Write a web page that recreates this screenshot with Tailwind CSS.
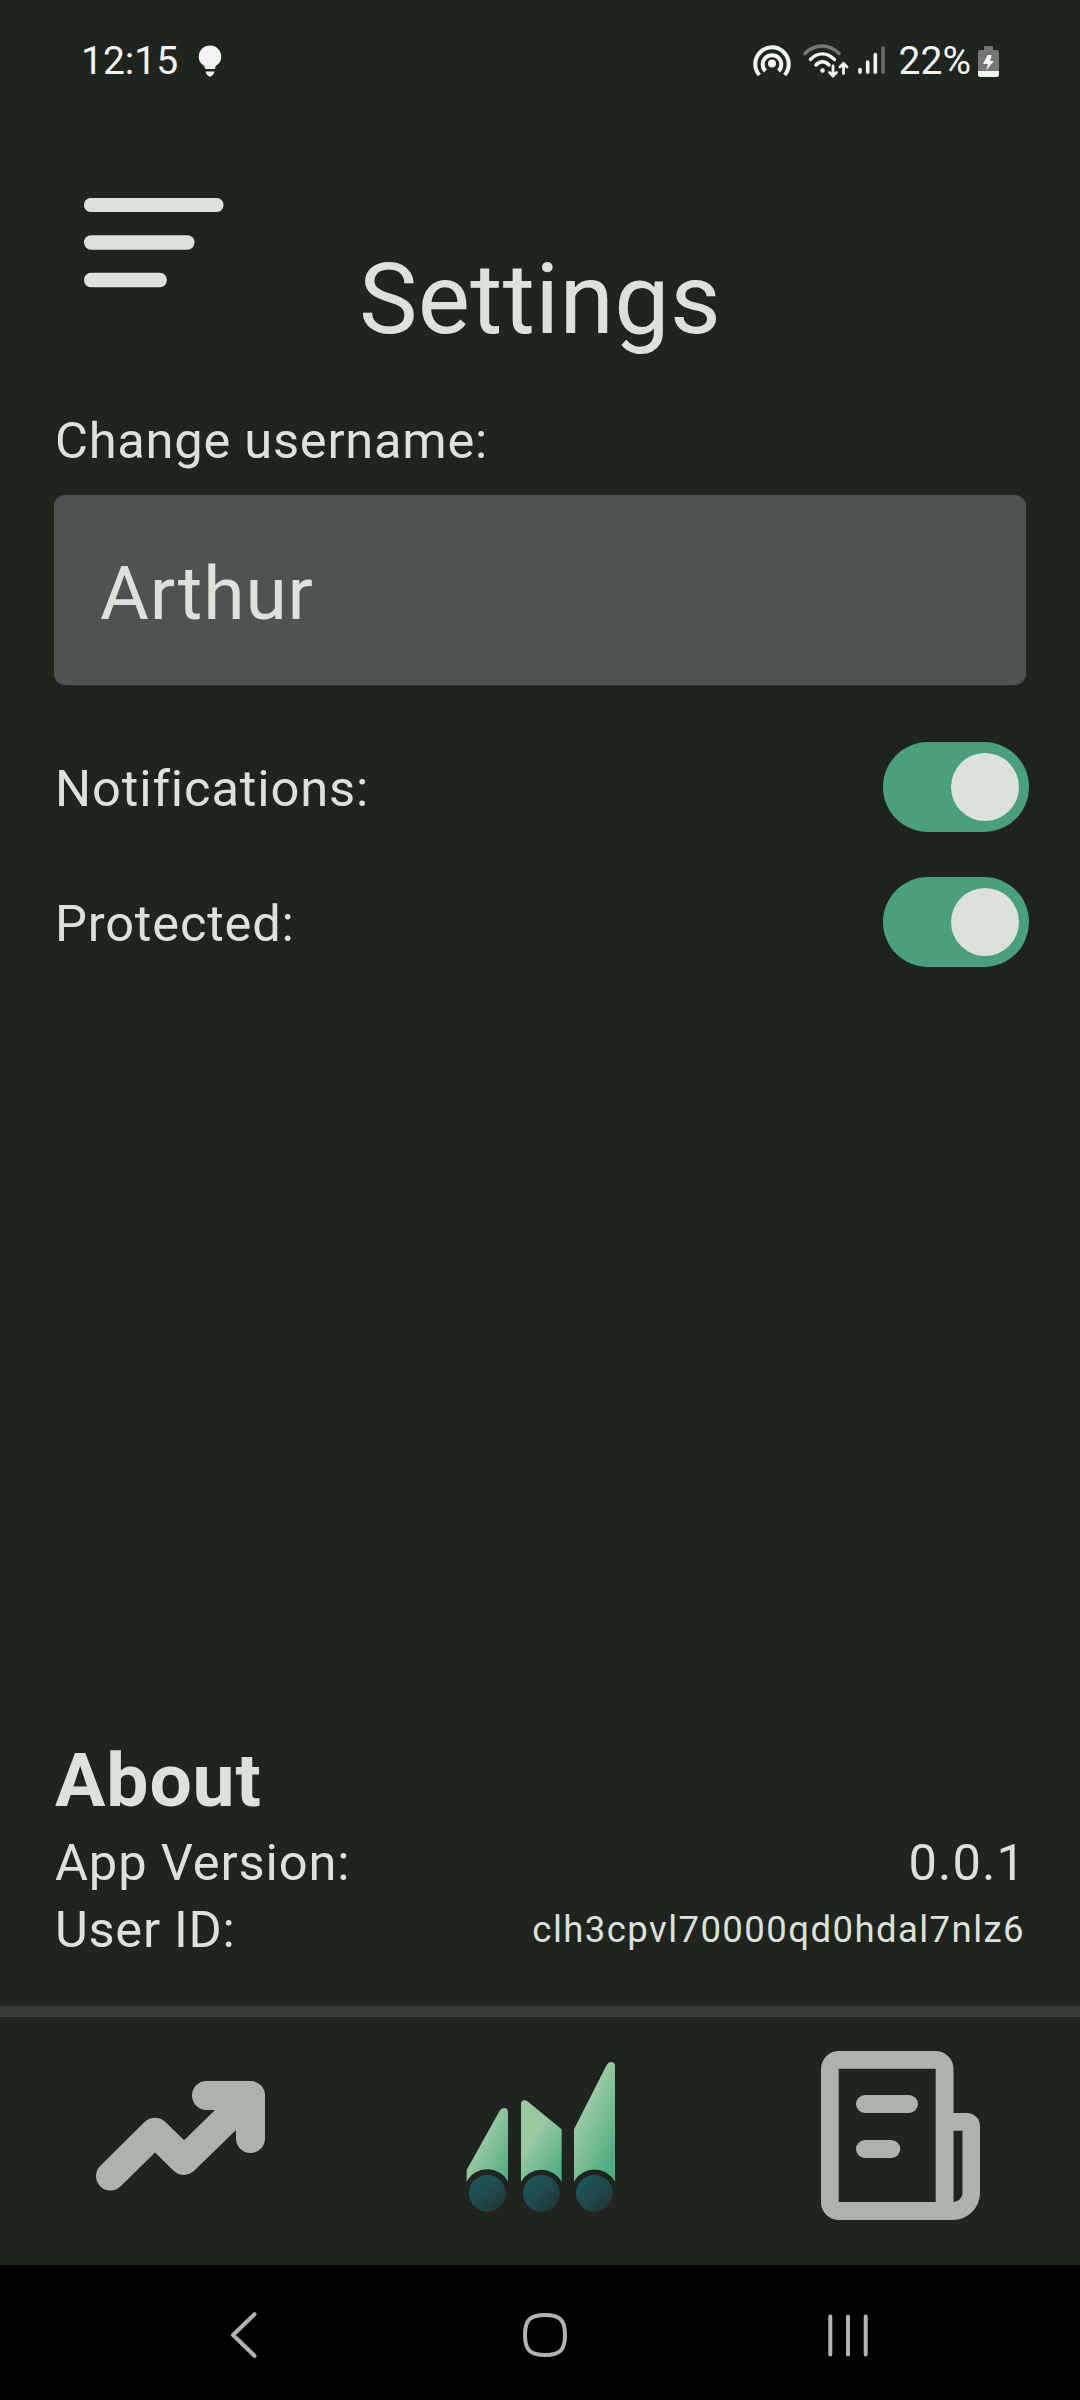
<!DOCTYPE html>
<html lang="en">
<head>
<meta charset="utf-8">
<title>Settings</title>
<script src="https://cdn.jsdelivr.net/npm/@tailwindcss/browser@4"></script>
</head>
<body class="bg-[#20241f]">
<div class="flex h-[2400px] w-[1080px] flex-col overflow-hidden bg-[#20241f] font-[Roboto,sans-serif] text-[#dce1db]">

  <!-- Status bar -->
  <div class="flex h-[122px] shrink-0 items-center pr-[81px] pl-[81px] text-[39px] leading-none text-[#f2f4f2]">
    <span>12:15</span>
    <svg class="ml-5 h-8 w-6" viewBox="0 0 24 32" fill="currentColor">
      <path d="M12 0.5a11.3 11.3 0 0 1 11.3 11.3c0 4.2-2.3 7.3-5.6 9.3l-.9 2.9H7.2l-.9-2.9C3 19.100.7 16 .7 11.800A11.3 11.3 0 0 1 12 .5Z"/>
      <path d="M7.500 26.500h9c-.4 2.600-2.300 4.500-4.500 5.300-2.200-.8-4.100-2.700-4.500-5.300Z"/>
    </svg>
    <svg class="ml-auto h-[34px] w-[38px]" viewBox="0 0 38 34" fill="none" stroke="currentColor" stroke-width="4">
      <path d="M6.400 31A16.700 16.700 0 1 1 31.600 31"/>
      <path d="M12.400 27A9.300 9.300 0 1 1 25.600 27"/>
      <circle cx="19" cy="19.500" r="4" fill="currentColor" stroke="none"/>
    </svg>
    <svg class="ml-3 h-[34px] w-[46px]" viewBox="0 0 46 34" fill="none" stroke="currentColor" stroke-width="3.400" stroke-linecap="round">
      <path class="text-[#747774]" stroke="currentColor" d="M2 9.500C12-.5 26-.5 36 9.500"/>
      <path d="M7.500 15.500c7-7.500 16.500-7.500 24 0"/>
      <path d="M13 21c4-4.300 9-4.300 13 0"/>
      <circle cx="19.500" cy="26.500" r="2.300" fill="currentColor" stroke="none"/>
      <path stroke-width="2.800" d="M30 22v10M26.500 28.500l3.500 3.500 3.500-3.500M40.500 29.500V19.500M37 23l3.500-3.500 3.500 3.500"/>
    </svg>
    <svg class="ml-[9px] h-[30px] w-[27px]" viewBox="0 0 27 30" fill="none" stroke="currentColor" stroke-width="3.600" stroke-linecap="round">
      <path d="M2 23.500v2.800M9.700 16v10.300M17.300 8.500v17.800"/>
      <path stroke="#686c68" d="M25 2v24.300"/>
    </svg>
    <span class="ml-[14px]">22%</span>
    <svg class="ml-[7px] h-[31px] w-[21px]" viewBox="0 0 21 31">
      <path fill="#747774" d="M6 0h9v4h3.500A2.500 2.500 0 0 1 21 6.500V26H0V6.500A2.500 2.500 0 0 1 2.500 4H6Z"/>
      <path fill="currentColor" d="M0 25h21v3.500a2.500 2.500 0 0 1-2.500 2.500h-16A2.500 2.500 0 0 1 0 28.500Z"/>
      <path fill="currentColor" d="M9.500 9h4.200l-1.500 6H16L8.200 24.500l1.600-6.500H5Z"/>
    </svg>
  </div>

  <!-- Header -->
  <header class="flex h-[289px] shrink-0 items-start px-[84px]">
    <svg class="mt-[76px] h-[90px] w-[140px]" viewBox="0 0 140 90" fill="currentColor">
      <rect x="0" y="0" width="139.500" height="14" rx="6.500"/>
      <rect x="0" y="37.300" width="110.500" height="14.500" rx="7"/>
      <rect x="0" y="74.700" width="82.800" height="14.500" rx="7"/>
    </svg>
    <h1 class="mt-[118px] mr-[140px] flex-1 text-center text-[98.440px] leading-[120px] tracking-[0.350px]">Settings</h1>
  </header>

  <!-- Settings form -->
  <main class="flex flex-1 flex-col px-[54px] pb-[43px] text-[50.630px]">
    <label for="username" class="pl-px leading-[60px] tracking-[0.740px]">Change username:</label>
    <div id="username" class="mt-6 flex h-[190px] shrink-0 items-center rounded-[11px] bg-[#4e5250] px-[46px] pt-[7px] text-[75px] leading-none tracking-[0.850px]">Arthur</div>

    <div class="-mr-[3px] mt-[57px] flex h-[90px] shrink-0 items-center justify-between">
      <span class="pt-1 pl-px leading-[60px] tracking-[0.880px]">Notifications:</span>
      <div class="flex h-[90px] w-[146px] items-center justify-end rounded-full bg-[#4aa07a] pr-[10px]">
        <div class="size-[68px] rounded-full bg-[#dce1dc]"></div>
      </div>
    </div>
    <div class="-mr-[3px] mt-[45px] flex h-[90px] shrink-0 items-center justify-between">
      <span class="pt-1 pl-px leading-[60px] tracking-[0.800px]">Protected:</span>
      <div class="flex h-[90px] w-[146px] items-center justify-end rounded-full bg-[#4aa07a] pr-[10px]">
        <div class="size-[68px] rounded-full bg-[#dce1dc]"></div>
      </div>
    </div>

    <section class="mt-auto">
      <h2 class="mb-1 pl-px text-[75px] leading-[90px] font-bold tracking-[0.900px]">About</h2>
      <div class="flex h-[67px] items-center justify-between">
        <span class="pl-px tracking-[0.850px]">App Version:</span>
        <span class="tracking-[1.100px]">0.0.1</span>
      </div>
      <div class="flex h-[67px] items-center justify-between">
        <span class="pl-px tracking-[0.700px]">User ID:</span>
        <span class="pr-px pt-px text-[36.560px] tracking-[1.420px]">clh3cpvl70000qd0hdal7nlz6</span>
      </div>
    </section>
  </main>

  <!-- Tab bar -->
  <nav class="flex h-[259px] shrink-0 items-center border-t-[11px] border-[#363a35] pb-[11px] pl-24 text-[#adb2ac]">
    <svg class="h-[110px] w-[169px]" viewBox="96 2081 169 110" fill="none" stroke="currentColor" stroke-width="29" stroke-linecap="round" stroke-linejoin="round">
      <path d="M110.500 2176 155 2132.200 184 2160.500 250.500 2095.500M206.500 2095.500H250.500V2138.500"/>
    </svg>
    <svg class="mt-[3px] ml-[201px] h-[151px] w-[150px]" viewBox="78 66 450 453">
      <defs>
        <linearGradient id="bar1" gradientUnits="userSpaceOnUse" x1="115" y1="320" x2="215" y2="370"><stop offset="0" stop-color="#9bc9a2"/><stop offset="1" stop-color="#55ad84"/></linearGradient>
        <linearGradient id="bar2" gradientUnits="userSpaceOnUse" x1="280" y1="290" x2="385" y2="365"><stop offset="0" stop-color="#9bc9a2"/><stop offset="1" stop-color="#50ac82"/></linearGradient>
        <linearGradient id="bar3" gradientUnits="userSpaceOnUse" x1="425" y1="230" x2="550" y2="290"><stop offset="0" stop-color="#9bc9a2"/><stop offset="1" stop-color="#50ac82"/></linearGradient>
        <linearGradient id="wheel" x1="0.200" y1="0.100" x2="0.850" y2="0.900"><stop offset="0" stop-color="#1d5456"/><stop offset="0.400" stop-color="#204c4f"/><stop offset="1" stop-color="#22383a"/></linearGradient>
      </defs>
      <path fill="url(#bar1)" d="M80 425V390L179 212Q184 204 192 204Q204 204 204 216V425A70 70 0 0 0 80 425Z"/>
      <path fill="url(#bar2)" d="M243 425V192Q243 181 254 181Q259 181 264 185L365 268V425A70 70 0 0 0 243 425Z"/>
      <path fill="url(#bar3)" d="M402 425V268L500 75Q505 66 513 66Q525 67 525 78V425A70 70 0 0 0 402 425Z"/>
      <g fill="url(#wheel)"><circle cx="142" cy="460" r="55"/><circle cx="304" cy="460" r="55"/><circle cx="463" cy="460" r="55"/></g>
    </svg>
    <svg class="ml-[205px] h-[169px] w-[159px]" viewBox="0 0 159 169" fill="currentColor">
      <path fill-rule="evenodd" d="M18 0H114.500A18 18 0 0 1 132.500 18V62H146A13 13 0 0 1 159 75V142A27 27 0 0 1 132 169H18A18 18 0 0 1 0 151V18A18 18 0 0 1 18 0ZM17.700 17.700V151H114.700V17.700ZM132.500 79.700V151A9 9 0 0 0 141.500 142V79.700Z"/>
      <rect x="35" y="44" width="62" height="18" rx="9"/>
      <rect x="35" y="89" width="44.300" height="18" rx="9"/>
    </svg>
  </nav>

  <!-- System navigation -->
  <div class="flex h-[135px] shrink-0 items-center bg-black pl-[230px]">
    <svg class="mt-1 h-[46px] w-[27px]" viewBox="0 0 27 46" fill="none" stroke="#b3b3b3" stroke-width="4" stroke-linecap="round" stroke-linejoin="round"><path d="M24.500 2.200 3 23 24.500 43.800"/></svg>
    <svg class="mt-1 ml-[266px] size-11" viewBox="0 0 44 44" fill="none" stroke="#b3b3b3" stroke-width="4"><path d="M22 2C37 2 42 7 42 22S37 42 22 42 2 37 2 22 7 2 22 2Z"/></svg>
    <svg class="mt-[5px] ml-[261px] h-[43px] w-10" viewBox="0 0 40 43" stroke="#b3b3b3" stroke-width="4" stroke-linecap="round"><path d="M2.300 2.500v38M20 2.500v38M37.700 2.500v38"/></svg>
  </div>
</div>
</body>
</html>
